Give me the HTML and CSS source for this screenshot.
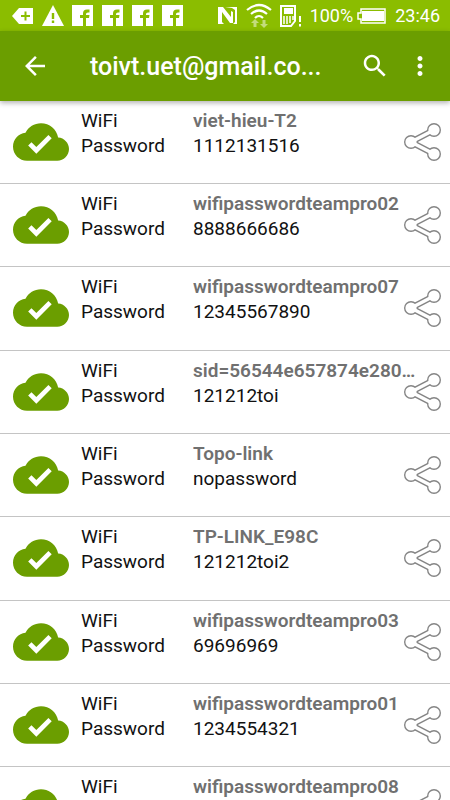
FILE: index.html
```
<!DOCTYPE html>
<html lang="en">
<head>
<meta charset="UTF-8">
<meta name="viewport" content="width=device-width, initial-scale=1.0">
<title>WiFi Passwords</title>
<link rel="stylesheet" href="styles.css">
</head>
<body>
  <svg width="0" height="0" class="symbols" aria-hidden="true">
    <symbol id="facebook" viewBox="0 0 22 22">
      <path fill="#fff" d="M0 0h21v21H0z"/>
      <path fill="#8bbd00" d="M11 21v-8H8V10h3V8.500Q11 4.500 15 4.500h2.500v3H16q-2 0-2 1.500v1h3.500l-.500 3h-3v8z"/>
    </symbol>
    <symbol id="cloud" viewBox="0 0 24 24">
      <path d="M19.350 10.040C18.670 6.590 15.640 4 12 4 9.110 4 6.600 5.640 5.350 8.040 2.340 8.360 0 10.910 0 14c0 3.310 2.690 6 6 6h13c2.760 0 5-2.240 5-5 0-2.640-2.050-4.780-4.650-4.960zM10 17l-3.500-3.500 1.410-1.410L10 14.170 15.180 9l1.410 1.410L10 17z"/>
    </symbol>
    <symbol id="share" viewBox="0 0 40 40">
      <path d="M32 8L9 20l23 12" fill="none" stroke="#858585" stroke-width="6.400"/>
      <g fill="#858585"><circle cx="9" cy="20" r="7"/><circle cx="32" cy="8" r="7"/><circle cx="32" cy="32" r="7"/></g>
      <path d="M32 8L9 20l23 12" fill="none" stroke="#fff" stroke-width="3.400"/>
      <g fill="#fff"><circle cx="9" cy="20" r="5.600"/><circle cx="32" cy="8" r="5.600"/><circle cx="32" cy="32" r="5.600"/></g>
    </symbol>
  </svg>

  <div class="status-bar">
    <div class="status-group">
      <svg width="22" height="22" viewBox="0 0 22 22"><path fill="#fff" d="M0 11l7-8h14v16H7z"/><path stroke="#8bbd00" stroke-width="2" d="M9 11h9M13.500 6.500v9"/></svg>
      <svg width="22" height="22" viewBox="0 0 22 22"><path fill="#fff" d="M11 0l11 21H0z"/><path stroke="#8bbd00" stroke-width="2.400" d="M11 8v6M11 15.500v2.500"/></svg>
      <svg width="22" height="22"><use href="#facebook"/></svg>
      <svg width="22" height="22"><use href="#facebook"/></svg>
      <svg width="22" height="22"><use href="#facebook"/></svg>
      <svg width="22" height="22"><use href="#facebook"/></svg>
    </div>
    <div class="status-group">
      <svg width="20" height="20" viewBox="0 0 20 20"><path fill="#fff" d="M0 1h5l8 10V5l2 1v11h-3L4 6v10l2 2H0zM7 1h12v17h-4l2-2V4l-3-2z"/></svg>
      <svg width="26" height="26" viewBox="0 0 26 26"><g fill="none" stroke="#fff" stroke-width="2.200"><path d="M1 7Q13-3 25 7M5 11Q13 4 21 11M9 15q4-4 8 0"/></g><path fill="#c3dc7c" d="M9 16l4 4h-2.500v4h-3v-4H5zM18 25l-4-4h2.500v-4h3v4H22z"/></svg>
      <svg width="22" height="24" viewBox="0 0 22 24"><path fill="none" stroke="#fff" stroke-width="2" d="M1 2h14v15l-4 5H1z"/><path fill="#fff" d="M4 4h9v6H4z"/><path stroke="#fff" stroke-width="1.500" d="M4 12v8M7 12v8M10 12v7M13 12v4"/><path stroke="#fff" stroke-width="2" d="M20 12v6M20 20v2.500"/></svg>
      <div class="battery">
        <span>100%</span>
        <svg width="30" height="16" viewBox="0 0 30 16"><path fill="none" stroke="#fff" stroke-width="1.500" d="M4 1h24v14H4v-4H1V5h3z"/><path fill="#fff" d="M5 3h22v10H5z"/></svg>
      </div>
      <span>23:46</span>
    </div>
  </div>

  <header class="toolbar">
    <button type="button" class="icon-button" aria-label="Back">
      <svg width="30" height="30" viewBox="0 0 24 24"><path d="M20 11H7.830l5.590-5.590L12 4l-8 8 8 8 1.410-1.410L7.830 13H20v-2z"/></svg>
    </button>
    <h1 class="title">toivt.uet@gmail.co...</h1>
    <button type="button" class="icon-button" aria-label="Search">
      <svg width="30" height="30" viewBox="0 0 24 24"><path d="M15.500 14h-.790l-.280-.270C15.410 12.590 16 11.110 16 9.500 16 5.910 13.090 3 9.500 3S3 5.910 3 9.500 5.910 16 9.500 16c1.610 0 3.090-.590 4.230-1.570l.270.280v.790l5 4.990L20.490 19l-4.990-5zm-6 0C7.010 14 5 11.990 5 9.500S7.010 5 9.500 5 14 7.010 14 9.500 11.990 14 9.500 14z"/></svg>
    </button>
    <button type="button" class="icon-button" aria-label="More options">
      <svg width="30" height="30" viewBox="0 0 24 24"><path d="M12 8c1.100 0 2-.900 2-2s-.900-2-2-2-2 .900-2 2 .900 2 2 2zm0 2c-1.100 0-2 .900-2 2s.900 2 2 2 2-.900 2-2-.900-2-2-2zm0 6c-1.100 0-2 .900-2 2s.900 2 2 2 2-.900 2-2-.900-2-2-2z"/></svg>
    </button>
  </header>

  <ul class="wifi-list">
    <li class="wifi-item">
      <svg class="cloud"><use href="#cloud"/></svg>
      <dl class="details">
        <dt>WiFi</dt><dd class="ssid">viet-hieu-T2</dd>
        <dt>Password</dt><dd>1112131516</dd>
      </dl>
      <button type="button" class="share" aria-label="Share"><svg width="40" height="40"><use href="#share"/></svg></button>
    </li>
    <li class="wifi-item">
      <svg class="cloud"><use href="#cloud"/></svg>
      <dl class="details">
        <dt>WiFi</dt><dd class="ssid">wifipasswordteampro02</dd>
        <dt>Password</dt><dd>8888666686</dd>
      </dl>
      <button type="button" class="share" aria-label="Share"><svg width="40" height="40"><use href="#share"/></svg></button>
    </li>
    <li class="wifi-item">
      <svg class="cloud"><use href="#cloud"/></svg>
      <dl class="details">
        <dt>WiFi</dt><dd class="ssid">wifipasswordteampro07</dd>
        <dt>Password</dt><dd>12345567890</dd>
      </dl>
      <button type="button" class="share" aria-label="Share"><svg width="40" height="40"><use href="#share"/></svg></button>
    </li>
    <li class="wifi-item">
      <svg class="cloud"><use href="#cloud"/></svg>
      <dl class="details">
        <dt>WiFi</dt><dd class="ssid">sid=56544e657874e280…</dd>
        <dt>Password</dt><dd>121212toi</dd>
      </dl>
      <button type="button" class="share" aria-label="Share"><svg width="40" height="40"><use href="#share"/></svg></button>
    </li>
    <li class="wifi-item">
      <svg class="cloud"><use href="#cloud"/></svg>
      <dl class="details">
        <dt>WiFi</dt><dd class="ssid">Topo-link</dd>
        <dt>Password</dt><dd>nopassword</dd>
      </dl>
      <button type="button" class="share" aria-label="Share"><svg width="40" height="40"><use href="#share"/></svg></button>
    </li>
    <li class="wifi-item">
      <svg class="cloud"><use href="#cloud"/></svg>
      <dl class="details">
        <dt>WiFi</dt><dd class="ssid">TP-LINK_E98C</dd>
        <dt>Password</dt><dd>121212toi2</dd>
      </dl>
      <button type="button" class="share" aria-label="Share"><svg width="40" height="40"><use href="#share"/></svg></button>
    </li>
    <li class="wifi-item">
      <svg class="cloud"><use href="#cloud"/></svg>
      <dl class="details">
        <dt>WiFi</dt><dd class="ssid">wifipasswordteampro03</dd>
        <dt>Password</dt><dd>69696969</dd>
      </dl>
      <button type="button" class="share" aria-label="Share"><svg width="40" height="40"><use href="#share"/></svg></button>
    </li>
    <li class="wifi-item">
      <svg class="cloud"><use href="#cloud"/></svg>
      <dl class="details">
        <dt>WiFi</dt><dd class="ssid">wifipasswordteampro01</dd>
        <dt>Password</dt><dd>1234554321</dd>
      </dl>
      <button type="button" class="share" aria-label="Share"><svg width="40" height="40"><use href="#share"/></svg></button>
    </li>
    <li class="wifi-item">
      <svg class="cloud"><use href="#cloud"/></svg>
      <dl class="details">
        <dt>WiFi</dt><dd class="ssid">wifipasswordteampro08</dd>
      </dl>
      <button type="button" class="share" aria-label="Share"><svg width="40" height="40"><use href="#share"/></svg></button>
    </li>
  </ul>
</body>
</html>
```
FILE: styles.css
```
* {
  box-sizing: border-box;
}
body {
  display: flex;
  flex-direction: column;
  height: 100vh;
  margin: 0;
  font-family: Roboto, sans-serif;
  font-size: 19px;
  color: #111;
  background-color: #fff;
}
svg {
  display: block;
  flex-shrink: 0;
}
.symbols {
  display: none;
}
button {
  padding: 0;
  border: none;
  background: none;
  cursor: pointer;
}
.status-bar {
  display: flex;
  flex-shrink: 0;
  justify-content: space-between;
  height: 31px;
  padding: 0 10px 0 12px;
  background-color: #8bbd00;
  color: #fff;
  font-size: 18px;
}
.status-group {
  display: flex;
  align-items: center;
  gap: 8px;
}
.battery {
  display: flex;
  align-items: center;
  gap: 4px;
}
.toolbar {
  display: flex;
  flex-shrink: 0;
  align-items: center;
  height: 70px;
  padding: 0 15px 0 20px;
  background-color: #6b9e00;
  box-shadow: 0 2px 5px rgba(0, 0, 0, 0.3);
  z-index: 1;
}
.icon-button {
  fill: #fff;
}
.title {
  flex: 1;
  margin: 0 0 0 40px;
  color: #fff;
  font-size: 25px;
  font-weight: 500;
  white-space: nowrap;
}
.icon-button + .icon-button {
  margin-left: 15px;
}
.wifi-list {
  flex: 1;
  min-height: 0;
  margin: 0;
  padding: 0;
  list-style: none;
  overflow-y: auto;
  scrollbar-width: none;
}
.wifi-item {
  display: flex;
  align-items: flex-start;
  height: 83px;
  padding: 7px 8px 0 13px;
  border-bottom: 1px solid #c4c4c4;
}
.wifi-item:nth-child(3n) {
  height: 84px;
}
.cloud {
  width: 56px;
  height: 56px;
  margin-top: 6px;
  fill: #6b9e00;
}
.details {
  display: grid;
  grid-template-columns: 112px 1fr;
  flex: 1;
  min-width: 0;
  margin: 0 0 0 12px;
  line-height: 25px;
}
.details dd {
  margin: 0;
  overflow: hidden;
  text-overflow: ellipsis;
  white-space: nowrap;
}
.details .ssid {
  color: #707070;
  font-weight: 600;
}
.share {
  margin: 14px 0 0 -20px;
}
```
